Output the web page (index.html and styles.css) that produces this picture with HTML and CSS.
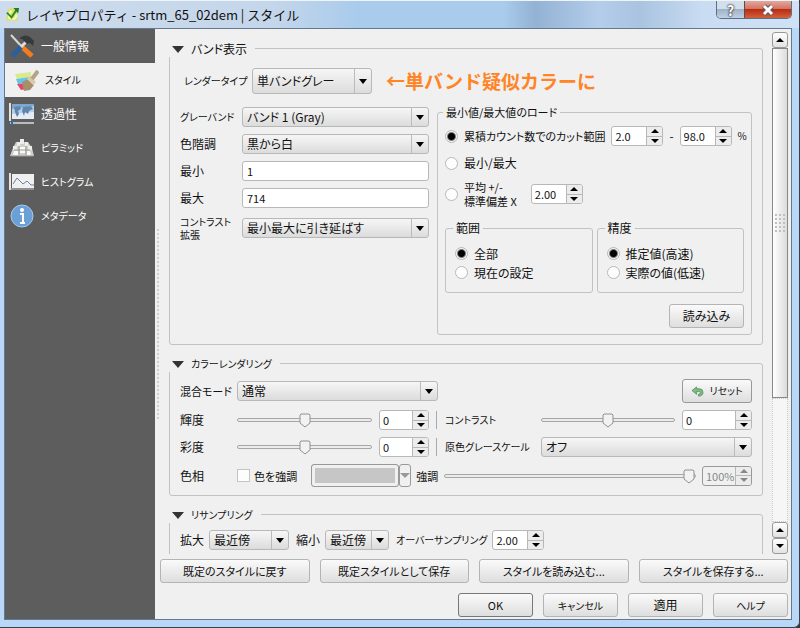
FILE: index.html
```
<!doctype html>
<html lang="ja">
    <head>
        <meta charset="utf-8">
        <title>レイヤプロパティ</title>
        <link rel="stylesheet" href="styles.css">
    </head>
    <body>
        <div class="window">
            <header class="titlebar">
                <svg class="logo" viewBox="0 0 16 16">
                    <path d="M3 3l4-2 3 1 3 4-1 5 3 3-4 1-3-1-5 1-2-2 2-5z" fill="#dfe35a"/>
                    <path d="M5 13q-2-6 2-9M8 13q4 0 4-5" fill="none" stroke="#f8fac8" stroke-width="2"/>
                    <path d="M2 6l5 5 6-9" fill="none" stroke="#2b8a2e" stroke-width="2"/>
                    <path d="M9 1h6l-1 6z" fill="#1f7a2a"/>
                </svg>
                <h1>レイヤプロパティ - srtm_65_02dem | スタイル</h1>
                <div class="winbuttons">
                    <button class="help" aria-label="ヘルプ">?</button>
                    <button class="close" aria-label="閉じる">
                        <svg viewBox="0 0 14 12"><path d="M3 2l8 8M11 2l-8 8" stroke="#5d5560" stroke-width="5"/><path d="M3 2l8 8M11 2l-8 8" stroke="#fff" stroke-width="3"/></svg>
                    </button>
                </div>
            </header>
            <div class="body">
                <nav>
                    <ul>
                        <li><a href="#general">
                            <svg viewBox="0 0 26 26">
                                <path d="M2 2l12 13" stroke="#d8d8d8" stroke-width="2"/>
                                <path d="M13 14l10 9" stroke="#f57c1a" stroke-width="5"/>
                                <path d="M19 7L11 15" stroke="#ddd" stroke-width="3"/>
                                <path d="M12 14L3 23" stroke="#2d5f9e" stroke-width="5"/>
                                <path d="M12 4q5-3 9 0l4 4-1 5-3-3-3 1-4-4q-1-2-4-1z" fill="#353a3c"/>
                            </svg>一般情報</a></li>
                        <li class="selected"><a href="#style">
                            <svg viewBox="0 0 26 26">
                                <path d="M2 7l16-2v6L4 12z" fill="#d7ea8c"/>
                                <path d="M3 12l15-2v5L5 17z" fill="#62c4e8"/>
                                <path d="M4 17l12-1 2 5-10 2z" fill="#e0466f"/>
                                <path d="M9 15l6-3 6 6-4 5-6 1z" fill="#a58f6c"/>
                                <path d="M14 12l3-3 6 6-3 3z" fill="#d8cba9"/>
                                <path d="M19 12l6-8" stroke="#b3a486" stroke-width="4"/>
                            </svg><span class="kana">スタイル</span></a></li>
                        <li><a href="#transparency">
                            <svg viewBox="0 0 26 26">
                                <path d="M1 2v18" stroke="#e4e4e4" stroke-width="2"/>
                                <path d="M3 3h22v15H3z" fill="#7ea6cf"/>
                                <path d="M3 8l22-3v13H3z" fill="#b7cfe6"/>
                                <path d="M3 13l22-2v7H3z" fill="#e4edf5"/>
                                <path d="M5 6l6-1 1 3-3 2 1 3-2 3-2-5zM14 6l8-1 2 3-4 2-1 3-3-2-1 4-2-5z" fill="#5f86b0"/>
                                <path d="M1 22h24" stroke="#b9bcbe" stroke-width="2"/>
                                <path d="M3 20v4" stroke="#2370b8" stroke-width="2"/>
                            </svg>透過性</a></li>
                        <li><a href="#pyramid">
                            <svg viewBox="0 0 26 26">
                                <path d="M4 13l3-6h12l4 6 2 8H1z" fill="#cfcfcb"/>
                                <path d="M8 7h3v4H8zM11 4h4v5h-4zM16 7h3v4h-3zM4 11h4v4H4zM19 11h4v4h-4z" fill="#ededeb"/>
                                <path d="M5 16h4v4H4zM11 12h5v6h-5zM18 16h3l1 4h-4z" fill="#fafaf8"/>
                                <path d="M2 21h22M5 15h16M10 11v9M17 11v9" stroke="#9a9a96" stroke-width="1"/>
                            </svg><span class="kana">ピラミッド</span></a></li>
                        <li><a href="#histogram">
                            <svg viewBox="0 0 26 26">
                                <path d="M1 4v17" stroke="#e4e4e4" stroke-width="2"/>
                                <path d="M3 5h22v14H3z" fill="#f0f0f0"/>
                                <path d="M1 20h24" stroke="#c4c4c4" stroke-width="1"/>
                                <path d="M4 15l4-6 6 6 4-3 4 4h3" fill="none" stroke="#6b83a6" stroke-width="1"/>
                            </svg><span class="kana">ヒストグラム</span></a></li>
                        <li><a href="#metadata">
                            <svg viewBox="0 0 26 26">
                                <circle cx="13" cy="13" r="11" fill="#6b9fd8" stroke="#a9c9ec" stroke-width="1"/>
                                <circle cx="13" cy="7" r="2" fill="#fff"/>
                                <path d="M11 11h3v8M11 20h5" fill="none" stroke="#fff" stroke-width="2"/>
                            </svg><span class="kana">メタデータ</span></a></li>
                    </ul>
                </nav>
                <div class="splitter"></div>
                <main>
                    <div class="scrollarea">
                        <div class="groups">
                            <fieldset class="group">
                                <legend><span class="triangle"></span>バンド表示</legend>
                                <div class="row renderer">
                                    <label class="kana" for="renderer">レンダータイプ</label>
                                    <select class="tall" id="renderer"><option>単バンドグレー</option></select>
                                    <strong class="note">←単バンド疑似カラーに</strong>
                                </div>
                                <div class="columns">
                                    <div class="form">
                                        <label class="kana" for="grayband">グレーバンド</label>
                                        <select id="grayband"><option>バンド 1 (Gray)</option></select>
                                        <label for="gradient">色階調</label>
                                        <select id="gradient"><option>黒から白</option></select>
                                        <label for="min">最小</label>
                                        <input type="text" id="min" value="1">
                                        <label for="max">最大</label>
                                        <input type="text" id="max" value="714">
                                        <label class="twolines" for="contrastmode">コントラスト<br>拡張</label>
                                        <select id="contrastmode"><option>最小最大に引き延ばす</option></select>
                                    </div>
                                    <fieldset class="load">
                                        <legend class="mixed">最小値/最大値のロード</legend>
                                        <div class="row">
                                            <input type="radio" name="load" id="cut" checked>
                                            <label for="cut" class="mixed">累積カウント数でのカット範囲</label>
                                            <span class="spin"><input type="text" value="2.0" aria-label="下限"><span class="steps"><button aria-label="上"></button><button aria-label="下"></button></span></span>
                                            <span>-</span>
                                            <span class="spin"><input type="text" value="98.0" aria-label="上限"><span class="steps"><button aria-label="上"></button><button aria-label="下"></button></span></span>
                                            <span class="kana">%</span>
                                        </div>
                                        <div class="row">
                                            <input type="radio" name="load" id="minmax">
                                            <label for="minmax">最小/最大</label>
                                        </div>
                                        <div class="row">
                                            <input type="radio" name="load" id="stddev">
                                            <label class="twolines" for="stddev">平均 +/-<br>標準偏差 X</label>
                                            <span class="spin"><input type="text" value="2.00" aria-label="標準偏差"><span class="steps"><button aria-label="上"></button><button aria-label="下"></button></span></span>
                                        </div>
                                        <div class="options">
                                            <fieldset>
                                                <legend>範囲</legend>
                                                <div class="row"><input type="radio" name="extent" id="full" checked><label for="full">全部</label></div>
                                                <div class="row"><input type="radio" name="extent" id="current"><label for="current">現在の設定</label></div>
                                            </fieldset>
                                            <fieldset>
                                                <legend>精度</legend>
                                                <div class="row"><input type="radio" name="accuracy" id="estimate" checked><label for="estimate">推定値(高速)</label></div>
                                                <div class="row"><input type="radio" name="accuracy" id="actual"><label for="actual">実際の値(低速)</label></div>
                                            </fieldset>
                                        </div>
                                        <button class="button loadbutton">読み込み</button>
                                    </fieldset>
                                </div>
                            </fieldset>

                            <fieldset class="group color">
                                <legend><span class="triangle"></span><span class="kana">カラーレンダリング</span></legend>
                                <div class="row blend">
                                    <label class="mixed" for="blend">混合モード</label>
                                    <select id="blend"><option>通常</option></select>
                                    <button class="button reset">
                                        <svg viewBox="0 0 14 12"><path d="M1 5l5-4v2h3q4 0 4 4t-5 4v-2q2 0 2-2t-2-1H6v3z" fill="#7dbb82" stroke="#5d9a66" stroke-width="1"/></svg>
                                        <span class="kana">リセット</span>
                                    </button>
                                </div>
                                <div class="row adjust">
                                    <label class="name" for="brightness">輝度</label>
                                    <input type="range" id="brightness" min="-100" max="100" value="0">
                                    <span class="spin"><input type="text" value="0" aria-label="輝度"><span class="steps"><button aria-label="上"></button><button aria-label="下"></button></span></span>
                                    <span class="divider"></span>
                                    <label class="name2 kana" for="contrast">コントラスト</label>
                                    <input class="fill" type="range" id="contrast" min="-100" max="100" value="0">
                                    <span class="spin wide"><input type="text" value="0" aria-label="コントラスト"><span class="steps"><button aria-label="上"></button><button aria-label="下"></button></span></span>
                                </div>
                                <div class="row adjust">
                                    <label class="name" for="saturation">彩度</label>
                                    <input type="range" id="saturation" min="-100" max="100" value="0">
                                    <span class="spin"><input type="text" value="0" aria-label="彩度"><span class="steps"><button aria-label="上"></button><button aria-label="下"></button></span></span>
                                    <span class="divider"></span>
                                    <label class="name2 kana" for="grayscale">原色グレースケール</label>
                                    <select class="fill" id="grayscale"><option>オフ</option></select>
                                </div>
                                <div class="row hue">
                                    <span class="name">色相</span>
                                    <input type="checkbox" id="colorize">
                                    <label class="mixed" for="colorize">色を強調</label>
                                    <span class="colorbutton"><button class="swatch" disabled aria-label="色"></button><button class="drop" disabled aria-label="色の選択"></button></span>
                                    <label class="mixed" for="strength">強調</label>
                                    <input class="fill" type="range" id="strength" value="100" disabled>
                                    <span class="spin off"><input type="text" value="100%" disabled aria-label="強調"><span class="steps"><button disabled aria-label="上"></button><button disabled aria-label="下"></button></span></span>
                                </div>
                            </fieldset>

                            <fieldset class="group resampling">
                                <legend><span class="triangle"></span><span class="kana">リサンプリング</span></legend>
                                <div class="row">
                                    <label for="zoomin">拡大</label>
                                    <select class="zoomin" id="zoomin"><option>最近傍</option></select>
                                    <label for="zoomout">縮小</label>
                                    <select class="zoomout" id="zoomout"><option>最近傍</option></select>
                                    <label class="kana" for="oversampling">オーバーサンプリング</label>
                                    <span class="spin"><input type="text" id="oversampling" value="2.00"><span class="steps"><button aria-label="上"></button><button aria-label="下"></button></span></span>
                                </div>
                            </fieldset>
                        </div>
                        <div class="scrollbar">
                            <button class="up" aria-label="上へ"></button>
                            <div class="thumb"><span class="grip"></span></div>
                            <div class="track"></div>
                            <button class="up" aria-label="上へ"></button>
                            <button class="down" aria-label="下へ"></button>
                        </div>
                    </div>
                    <div class="stylebuttons">
                        <button class="button mixed">既定のスタイルに戻す</button>
                        <button class="button mixed">既定スタイルとして保存</button>
                        <button class="button mixed">スタイルを読み込む...</button>
                        <button class="button mixed">スタイルを保存する...</button>
                    </div>
                    <div class="dialogbuttons">
                        <button class="button mixed default">OK</button>
                        <button class="button"><span class="kana">キャンセル</span></button>
                        <button class="button">適用</button>
                        <button class="button"><span class="kana">ヘルプ</span></button>
                    </div>
                </main>
            </div>
        </div>
    </body>
</html>
```
FILE: styles.css
```
* {
    margin: 0;
    padding: 0;
    box-sizing: border-box;
}
body {
    height: 100vh;
    background: #32383d;
    color: #111;
    font: 12px/16px "Noto Sans CJK JP", sans-serif;
    font-feature-settings: "palt";
}
button,
input,
select {
    font: inherit;
    font-feature-settings: inherit;
    color: inherit;
}
label {
    flex: none;
    white-space: nowrap;
}
.kana {
    font-size: 10px;
}
.mixed {
    font-size: 11px;
}

/* ventana */
.window {
    height: 100vh;
    display: flex;
    flex-direction: column;
    padding: 0 7px 7px 4px;
    background: #b9d8f8;
    border-right: 1px solid #39424b;
    border-bottom: 1px solid #39424b;
    border-radius: 0 6px 6px 0;
}
.titlebar {
    height: 28px;
    flex: none;
    display: flex;
    align-items: center;
    gap: 6px;
    margin: 0 -7px 0 -4px;
    padding: 0 7px 0 5px;
    border-top: 1px solid #eef4fa;
    background: linear-gradient(90deg, #cddced, #c4d6ea 34%, #a9cbec 45%, #a9cbec 63%, #93b2d4 67%, #b4cdea 75%, #a9c3e0 80%, #c9dcf2 88%, #cfe1f5);
}
.logo {
    width: 15px;
    height: 15px;
}
h1 {
    font-size: 13px;
    font-weight: 400;
    font-feature-settings: normal;
}
.winbuttons {
    display: flex;
    align-self: flex-start;
    margin-left: auto;
    height: 18px;
    border: 1px solid #5d6f83;
    border-top: 0;
    border-radius: 0 0 5px 5px;
    overflow: hidden;
}
.winbuttons button {
    border: 0;
    color: #fff;
}
.help {
    width: 27px;
    font-size: 14px;
    font-weight: 700;
    text-shadow: 0 0 2px #222, 0 0 2px #222;
    background: linear-gradient(#d3dfeb 50%, #9fb3c8 50%, #bfd1e2);
}
.winbuttons .close {
    width: 47px;
    border-left: 1px solid #5d4a50;
    background: linear-gradient(#e3a79b, #d1705d 50%, #bb2c12 50%, #d2603c);
}
.close svg {
    width: 14px;
    height: 12px;
    display: block;
    margin: 0 auto;
}
.body {
    flex: 1;
    min-height: 0;
    display: flex;
    background: #f0f0f0;
    border: 1px solid #66788c;
}

/* menu lateral */
nav {
    width: 150px;
    flex: none;
    background: #5d5d5d;
}
nav ul {
    list-style: none;
}
nav a {
    height: 34px;
    display: flex;
    align-items: center;
    gap: 6px;
    padding-left: 4px;
    color: #fff;
    text-decoration: none;
}
nav svg {
    width: 26px;
    height: 26px;
    flex: none;
}
.selected a {
    padding-left: 8px;
    background: #f0f0f0;
    color: #111;
}
.splitter {
    width: 4px;
    height: 192px;
    flex: none;
    align-self: center;
    margin-left: 1px;
    background: radial-gradient(circle, #d0d0d0 1px, transparent 1px) 0 0 / 4px 4px;
}
main {
    flex: 1;
    min-width: 0;
    display: flex;
    flex-direction: column;
    padding: 0 3px 2px 0;
}
.scrollarea {
    flex: 1;
    min-height: 0;
    display: flex;
    gap: 9px;
    overflow: hidden;
}
.groups {
    flex: 1;
    min-width: 0;
    padding: 10px 0 0 9px;
}

/* grupos */
fieldset {
    min-width: 0;
    border: 1px solid #c2c2c2;
    border-radius: 3px;
}
legend {
    height: 16px;
    padding: 0 3px;
    margin-left: -2px;
}
.group {
    padding: 7px 10px 9px;
    margin-bottom: 9px;
}
.group > legend {
    height: 18px;
    display: flex;
    align-items: center;
    gap: 7px;
    margin-left: -11px;
    padding: 2px 8px 0 3px;
    background: #f0f0f0;
}
.triangle {
    border: 6px solid transparent;
    border-top: 7px solid #333;
    border-bottom: 0;
}
.row {
    display: flex;
    align-items: center;
}
.renderer {
    margin: 4px 0 10px;
    padding-left: 4px;
}
.renderer label {
    width: 68px;
}
.renderer select {
    width: 120px;
}
.note {
    margin-left: 14px;
    font-size: 19px;
    line-height: 26px;
    font-weight: 700;
    font-feature-settings: normal;
    color: #ff8426;
}
.columns {
    display: flex;
    gap: 8px;
}
.form {
    width: 249px;
    flex: none;
    display: grid;
    grid-template-columns: 62px 1fr;
    align-content: start;
    align-items: center;
    row-gap: 7px;
    padding-top: 3px;
}
.twolines {
    line-height: 14px;
    font-size: 11px;
}
.form .twolines {
    line-height: 13px;
    font-size: 10px;
}
.load {
    flex: 1;
    padding: 6px 7px;
}
.load > .row {
    min-height: 20px;
    margin-bottom: 7px;
}
.load > .row > span {
    margin-left: 6px;
}
.load .twolines {
    margin-right: 8px;
}
.options {
    display: flex;
    gap: 4px;
    margin: 12px 0 11px;
}
.options fieldset {
    flex: 1;
    padding: 8px 9px 10px;
}
.options .row {
    height: 19px;
}
.loadbutton {
    display: block;
    width: 75px;
    margin-left: auto;
}

/* controles */
select,
input[type="text"] {
    width: 100%;
    min-width: 0;
    height: 20px;
    padding: 0 4px;
    border: 1px solid #b8b8b8;
    border-radius: 3px;
    background: #fff;
    line-height: 16px;
}
input[type="text"] {
    font-size: 11px;
}
select {
    appearance: none;
    background:
        url("data:image/svg+xml,%3Csvg xmlns='http://www.w3.org/2000/svg' width='17' height='26'%3E%3Cpath d='M0 0v26' stroke='%23bbb' stroke-width='2'/%3E%3Cpath d='M5 11h8l-4 5z'/%3E%3C/svg%3E") right center no-repeat,
        linear-gradient(#f6f6f6, #dcdcdc);
}
.tall {
    height: 26px;
}
input[type="radio"] {
    appearance: none;
    width: 13px;
    height: 13px;
    flex: none;
    margin-right: 6px;
    border: 1px solid #b8b8b8;
    border-radius: 50%;
    background: #fdfdfd;
}
input[type="radio"]:checked {
    background: radial-gradient(circle, #000 3px, #f4f4f4 5px);
}
input[type="checkbox"] {
    appearance: none;
    width: 13px;
    height: 13px;
    flex: none;
    margin-right: 4px;
    border: 1px solid #c4c4c4;
    background: #fdfdfd;
}
.button {
    height: 24px;
    border: 1px solid #b4b4b4;
    border-radius: 3px;
    background: linear-gradient(#fafafa, #dedede);
}
.spin {
    width: 52px;
    height: 20px;
    flex: none;
    display: flex;
    border: 1px solid #b8b8b8;
    border-radius: 3px;
    background: #fff;
    overflow: hidden;
}
.spin input[type="text"] {
    flex: 1;
    height: 18px;
    border: 0;
    padding-left: 3px;
    padding-right: 0;
    background: none;
}
.steps {
    width: 16px;
    flex: none;
    display: flex;
    flex-direction: column;
    border-left: 1px solid #b8b8b8;
}
.steps button {
    flex: 1;
    display: flex;
    align-items: center;
    justify-content: center;
    border: 0;
    background: #ececec;
}
.steps button + button {
    border-top: 1px solid #b8b8b8;
}
.steps button::before,
.up::before,
.down::before {
    content: "";
    border: 4px solid transparent;
    border-top: 0;
    border-bottom: 4px solid #000;
}
.steps button + button::before,
.down::before {
    border-top: 4px solid #000;
    border-bottom: 0;
}
.off {
    background: #f0f0f0;
    color: #888;
    border-color: #999;
}
.steps button:disabled::before {
    border-bottom-color: #888;
}
.steps button + button:disabled::before {
    border-top-color: #888;
}
input[type="range"] {
    appearance: none;
    width: 135px;
    height: 20px;
    background: none;
}
input[type="range"]::-webkit-slider-runnable-track {
    height: 4px;
    border: 1px solid #a6a6a6;
    border-radius: 2px;
    background: #ececec;
}
input[type="range"]::-webkit-slider-thumb {
    appearance: none;
    width: 12px;
    height: 15px;
    margin-top: -6px;
    background: url("data:image/svg+xml,%3Csvg xmlns='http://www.w3.org/2000/svg' width='12' height='15'%3E%3Cpath d='M1 2l1-1h8l1 1v8l-5 4-5-4z' fill='%23f2f2f2' stroke='%23909090'/%3E%3C/svg%3E");
}

/* color */
.color {
    padding-bottom: 8px;
}
.color .row {
    margin-bottom: 7px;
}
.blend label,
.name {
    width: 57px;
    flex: none;
}
.blend select {
    width: 201px;
}
.reset {
    width: 70px;
    display: flex;
    align-items: center;
    justify-content: center;
    gap: 5px;
    margin-left: auto;
    border-color: #999;
}
.reset svg {
    width: 13px;
    height: 11px;
}
.adjust .spin {
    width: 50px;
    margin-left: 7px;
}
.adjust .wide {
    width: 70px;
}
.divider {
    height: 18px;
    margin: 0 8px 0 7px;
    border-left: 1px solid #aaa;
}
.name2 {
    width: 96px;
}
.fill {
    flex: 1;
    min-width: 0;
}
.color .hue {
    margin-bottom: 0;
}
.colorbutton {
    display: flex;
    height: 23px;
    margin: 0 5px 0 14px;
}
.swatch {
    width: 88px;
    border: 1px solid #999;
    border-radius: 3px;
    box-shadow: inset 0 0 0 3px #f0f0f0;
    background: #c6c6c6;
}
.drop {
    width: 12px;
    border: 1px solid #999;
    border-radius: 3px;
    background: #f0f0f0;
}
.drop::before {
    content: "";
    display: block;
    border: 5px solid transparent;
    border-top-color: #999;
    border-bottom: 0;
}
.hue .spin {
    width: 50px;
    margin-left: 6px;
}
.hue .fill {
    margin-left: 6px;
}
.resampling {
    padding-bottom: 20px;
}
.resampling label {
    margin-right: 5px;
}
.resampling select {
    margin-right: 7px;
}
.zoomin {
    width: 80px;
}
.zoomout {
    width: 64px;
}

/* barra de desplazamiento */
.scrollbar {
    width: 16px;
    flex: none;
    display: flex;
    flex-direction: column;
    padding-top: 3px;
}
.scrollbar button {
    height: 16px;
    display: flex;
    align-items: center;
    justify-content: center;
    border: 1px solid #999;
    border-radius: 3px;
    background: linear-gradient(#fff, #e2e2e2);
}
.thumb {
    flex: 351;
    display: flex;
    align-items: center;
    justify-content: center;
    border: 1px solid #888;
    background: linear-gradient(90deg, #fff, #dcdcdc);
}
.grip {
    width: 12px;
    height: 20px;
    background: radial-gradient(circle, #c0c0c0 1px, transparent 1px) 0 0 / 4px 4px;
}
.track {
    flex: 123;
    border: 1px dotted #ccc;
    background: #f6f6f6;
}

.stylebuttons {
    display: grid;
    grid-template-columns: repeat(4, 1fr);
    gap: 10px;
    margin-top: 5px;
}
.dialogbuttons {
    display: flex;
    justify-content: flex-end;
    gap: 10px;
    margin-top: 10px;
}
.dialogbuttons .button {
    width: 75px;
}
.dialogbuttons .default {
    border-color: #777;
}
```
